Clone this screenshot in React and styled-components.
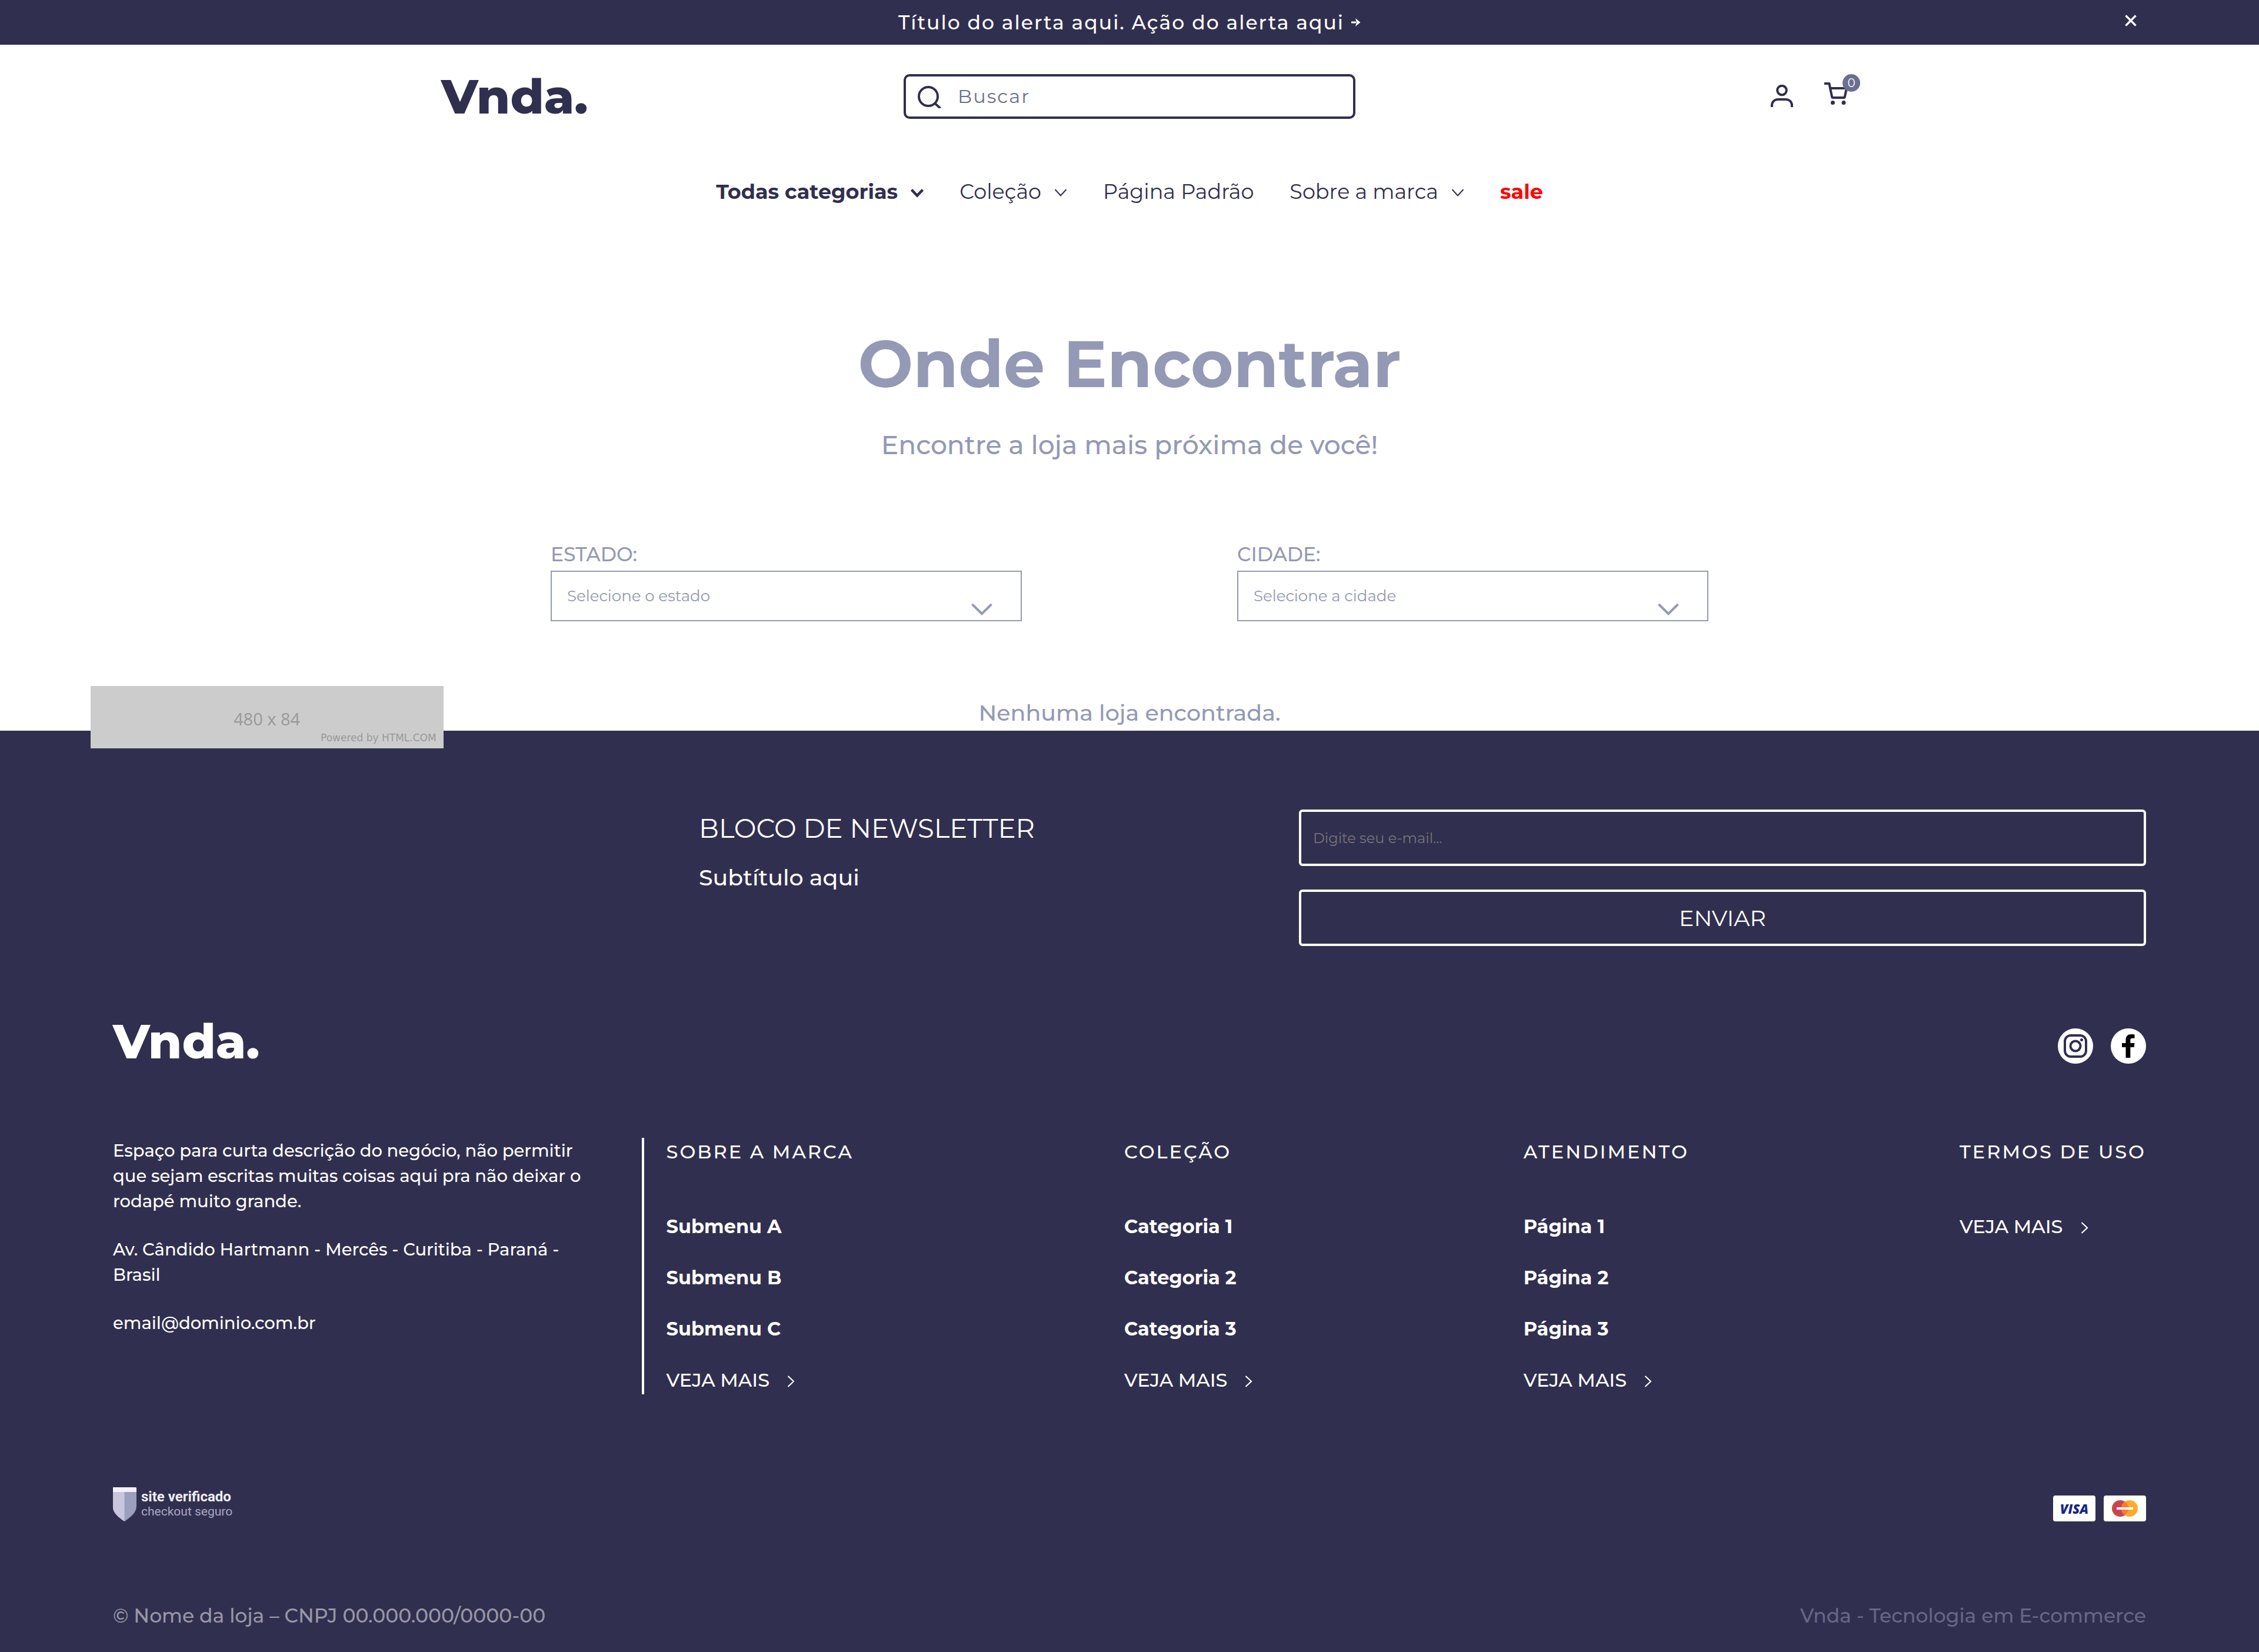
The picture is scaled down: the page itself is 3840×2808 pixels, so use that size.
import React from "react";
import styled, { createGlobalStyle } from "styled-components";

const color = {
  ink: "#312f4f",
  soft: "#6b6f8f",
  mist: "#9499b5",
  white: "#ffffff",
  sale: "#ff0000",
};

const GlobalStyle = createGlobalStyle`
  *, *::before, *::after { box-sizing: border-box; }
  body {
    margin: 0;
    background: ${color.white};
    color: ${color.ink};
    font-family: Montserrat, Inter, sans-serif;
    font-weight: 500;
  }
  h1, h2, h3, p, ul { margin: 0; padding: 0; }
  ul { list-style: none; }
  a { color: inherit; text-decoration: none; }
  svg { display: block; flex: none; }
  button, input, select { font: inherit; margin: 0; }
`;

/* ---------- alert ---------- */

const Alert = styled.div`
  display: grid;
  grid-template-columns: 1fr auto 1fr;
  align-items: center;
  height: 76px;
  padding: 0 208px;
  background: ${color.ink};
  color: ${color.white};
`;

const AlertLink = styled.a`
  grid-column: 2;
  display: flex;
  align-items: center;
  gap: 12px;
  font-size: 33px;
  line-height: 40px;
  letter-spacing: 2px;
`;

const CloseButton = styled.button`
  justify-self: end;
  padding: 0 0 6px;
  border: 0;
  background: none;
  color: inherit;
`;

/* ---------- header ---------- */

const HeaderBar = styled.div`
  display: grid;
  grid-template-columns: 1fr 768px 1fr;
  align-items: center;
  width: 100%;
  max-width: 2484px;
  margin: 0 auto;
  padding-top: 50px;
`;

const Logo = styled.a`
  font-size: 82px;
  font-weight: 800;
  line-height: 84px;
`;

const HeaderLogo = styled(Logo)`
  margin: -4px 0;
  padding-left: 72px;
`;

const Search = styled.label`
  display: flex;
  align-items: center;
  gap: 28px;
  height: 76px;
  padding: 0 20px;
  border: 4px solid ${color.ink};
  border-radius: 10px;
`;

const SearchInput = styled.input`
  flex: 1;
  min-width: 0;
  padding: 0;
  border: 0;
  outline: 0;
  background: none;
  color: ${color.ink};
  font-size: 32px;
  font-weight: 400;
  line-height: 40px;
  letter-spacing: 2px;
  &::placeholder { color: ${color.soft}; opacity: 1; }
`;

const Actions = styled.div`
  display: flex;
  align-items: flex-end;
  align-self: start;
  justify-self: end;
  gap: 53px;
`;

const CartLink = styled.a`
  position: relative;
  padding: 14px 21px 4px 0;
`;

const Badge = styled.span`
  position: absolute;
  top: 0;
  right: 0;
  width: 30px;
  height: 30px;
  border-radius: 50%;
  background: ${color.soft};
  color: ${color.white};
  font-size: 20px;
  font-weight: 400;
  line-height: 30px;
  text-align: center;
`;

const Nav = styled.nav`
  display: flex;
  justify-content: center;
  gap: 61px;
  margin-top: 100px;
`;

const NavLink = styled.a`
  display: flex;
  align-items: center;
  gap: 22px;
  font-size: 35px;
  line-height: 48px;
  font-weight: ${(p) => (p.$strong ? 700 : 400)};
  color: ${(p) => (p.$sale ? color.sale : color.ink)};
  svg { margin-top: 4px; }
`;

/* ---------- store finder ---------- */

const Main = styled.main`
  position: relative;
  padding: 202px 0 6px;
  color: ${color.mist};
  text-align: center;
`;

const Title = styled.h1`
  font-size: 111px;
  line-height: 134px;
  font-weight: 700;
`;

const Lead = styled.p`
  margin-top: 42px;
  font-size: 44px;
  line-height: 56px;
`;

const Filters = styled.form`
  display: grid;
  grid-template-columns: 1fr 1fr;
  gap: 366px;
  width: 100%;
  max-width: 1968px;
  margin: 138px auto 0;
  text-align: left;
`;

const Field = styled.div`
  display: flex;
  flex-direction: column;
  gap: 8px;
`;

const FieldLabel = styled.label`
  font-size: 33px;
  line-height: 40px;
`;

const SelectWrap = styled.div`
  position: relative;
  svg {
    position: absolute;
    right: 50px;
    bottom: 10px;
    pointer-events: none;
  }
`;

const Select = styled.select`
  display: block;
  width: 100%;
  height: 86px;
  padding: 0 26px;
  appearance: none;
  border: 2px solid ${color.mist};
  border-radius: 0;
  background: ${color.white};
  color: ${color.mist};
  font-size: 26px;
  font-weight: 400;
`;

const Status = styled.p`
  margin-top: 132px;
  font-size: 38px;
  line-height: 48px;
`;

const Placeholder = styled.div`
  position: absolute;
  left: 4%;
  bottom: -30px;
  display: flex;
  flex-direction: column;
  justify-content: flex-end;
  width: 600px;
  height: 106px;
  padding: 0 12px 6px;
  background: #cccccc;
  color: #999999;
`;

const PlaceholderSize = styled.span`
  font-family: "Open Sans", sans-serif;
  font-size: 29px;
  line-height: 40px;
`;

const PlaceholderCredit = styled.span`
  align-self: flex-end;
  font-family: "DejaVu Sans", sans-serif;
  font-size: 17px;
  line-height: 24px;
`;

/* ---------- footer ---------- */

const Footer = styled.footer`
  padding: 134px 5% 38px;
  background: ${color.ink};
  color: ${color.white};
`;

const Newsletter = styled.section`
  display: grid;
  grid-template-columns: 996fr 1020fr 1440fr;
`;

const NewsletterText = styled.div`
  grid-column: 2;
  padding-top: 4px;
`;

const NewsletterTitle = styled.h2`
  font-size: 45px;
  line-height: 56px;
  font-weight: 400;
`;

const NewsletterSubtitle = styled.p`
  margin-top: 32px;
  font-size: 38px;
  line-height: 48px;
`;

const NewsletterForm = styled.form`
  display: grid;
  gap: 40px;
`;

const EmailInput = styled.input`
  width: 100%;
  height: 96px;
  padding: 0 20px;
  border: 4px solid ${color.white};
  border-radius: 6px;
  background: none;
  color: ${color.white};
  font-size: 24px;
  font-weight: 400;
  &::placeholder { color: #757575; opacity: 1; }
`;

const SubmitButton = styled.button`
  height: 96px;
  border: 4px solid ${color.white};
  border-radius: 6px;
  background: none;
  color: ${color.white};
  font-size: 38px;
  font-weight: 400;
`;

const Row = styled.div`
  display: flex;
  align-items: flex-end;
  justify-content: space-between;
  margin-top: ${(p) => p.$top}px;
`;

const Social = styled.div`
  display: flex;
  gap: 30px;
  padding-bottom: 4px;
`;

const Columns = styled.div`
  display: grid;
  grid-template-columns: 26% 74%;
  margin-top: 122px;
`;

const About = styled.div`
  display: flex;
  flex-direction: column;
  gap: 39px;
  padding-right: 90px;
  font-size: 29px;
  line-height: 43px;
`;

const Menus = styled.div`
  display: flex;
  justify-content: space-between;
  padding-left: 38px;
  border-left: 4px solid ${color.white};
`;

const MenuTitle = styled.h3`
  font-size: 32px;
  line-height: 48px;
  font-weight: 500;
  letter-spacing: 3px;
`;

const MenuList = styled.ul`
  display: grid;
  gap: 39px;
  margin-top: 79px;
`;

const MenuLink = styled.a`
  display: flex;
  align-items: center;
  gap: 30px;
  font-size: 32px;
  line-height: 48px;
  font-weight: ${(p) => (p.$more ? 500 : 700)};
  svg { margin-top: 4px; }
`;

const Seal = styled.div`
  display: flex;
  align-items: center;
  gap: 8px;
  font-family: Roboto, sans-serif;
  font-size: 21px;
  line-height: 25px;
  font-weight: 400;
  color: #aaa7c4;
  strong { display: block; font-size: 24px; font-weight: 700; color: #eeedf6; }
`;

const Cards = styled.div`
  display: flex;
  gap: 14px;
`;

const Card = styled.span`
  display: flex;
  align-items: center;
  justify-content: center;
  width: 72px;
  height: 44px;
  border-radius: 4px;
  background: ${color.white};
  color: #15268c;
  font: italic 800 22px/44px "Open Sans", sans-serif;
`;

const Legal = styled.p`
  font-size: 33px;
  line-height: 48px;
  color: ${(p) => (p.$faint ? "#676687" : "#9897a7")};
`;

/* ---------- icons ---------- */

const stroke = (width) => ({ fill: "none", stroke: "currentColor", strokeWidth: width });

const ArrowIcon = () => (
  <svg width="16" height="16" viewBox="0 0 16 16" aria-hidden="true">
    <path d="M0 6.5h8V9.500H0z" fill="currentColor" />
    <path d="M7 1l8.500 7L7 15l2-7z" fill="currentColor" />
  </svg>
);

const CloseIcon = () => (
  <svg width="20" height="20" viewBox="0 0 20 20" {...stroke(3.4)}>
    <path d="M1.500 1.500l17 17M18.500 1.500l-17 17" />
  </svg>
);

const SearchIcon = () => (
  <svg width="40" height="40" viewBox="0 0 40 40" {...stroke(4)} aria-hidden="true">
    <circle cx="18" cy="20" r="16" />
    <path d="M28.500 31l10 9" />
  </svg>
);

const UserIcon = () => (
  <svg width="38" height="38" viewBox="0 0 38 38" {...stroke(4)}>
    <circle cx="19" cy="9.500" r="7.800" />
    <path d="M2 38v-3a10 10 0 0 1 10-10h14a10 10 0 0 1 10 10v3" />
  </svg>
);

const CartIcon = () => (
  <svg width="40" height="38" viewBox="0 0 40 38" {...stroke(4)} strokeLinejoin="round">
    <path d="M0 2h8.500l1.500 8h28l-3 14a2 2 0 0 1-2 2H15a2 2 0 0 1-2-2L10 10" />
    <circle cx="14.500" cy="34.500" r="3.500" fill="currentColor" stroke="none" />
    <circle cx="33" cy="34.500" r="3.500" fill="currentColor" stroke="none" />
  </svg>
);

const ChevronDown = ({ strong }) => (
  <svg
    width="22"
    height="16"
    viewBox="0 0 22 16"
    {...stroke(strong ? 4.6 : 2)}
    aria-hidden="true"
  >
    <path d={strong ? "M1.500 2.500l9.500 10 9.500-10" : "M1.500 2l9.500 10.500L20.500 2"} />
  </svg>
);

const SelectChevron = () => (
  <svg width="36" height="20" viewBox="0 0 36 20" {...stroke(4)} aria-hidden="true">
    <path d="M1.500 1L18 17.200 34.500 1" />
  </svg>
);

const ChevronRight = () => (
  <svg width="13" height="20" viewBox="0 0 13 20" {...stroke(2.2)} aria-hidden="true">
    <path d="M1.500 1l9.500 9-9.500 9" />
  </svg>
);

const InstagramIcon = () => (
  <svg width="60" height="60" viewBox="0 0 60 60">
    <circle cx="30" cy="30" r="30" fill={color.white} />
    <rect x="12" y="12" width="36" height="36" rx="10" {...stroke(4)} stroke={color.ink} />
    <circle cx="30" cy="30" r="8.500" {...stroke(4)} stroke={color.ink} />
    <circle cx="40.500" cy="19.500" r="2.500" fill={color.ink} />
  </svg>
);

const FacebookIcon = () => (
  <svg width="60" height="60" viewBox="0 0 60 60">
    <circle cx="30" cy="30" r="30" fill={color.white} />
    <path
      d="M25.500 50V32H19v-7h6.500v-5.500c0-6.300 3.600-9.500 9.200-9.500 2.600 0 5.300.2 5.800.5v6.200h-3.600c-2.900 0-3.600 1.400-3.600 3.600V25h7.200l-1 7h-6.200v18z"
      fill="#000"
    />
  </svg>
);

const ShieldIcon = () => (
  <svg width="40" height="58" viewBox="0 0 40 58" aria-hidden="true">
    <path d="M0 0h38q2 0 2 3v29c0 11-10 19-20.500 26C9 51 0 43 0 34z" fill="#9aa0bd" />
    <path d="M0 8h19.500v50C9 51 0 43 0 34z" fill="#c9c5dc" />
    <path d="M0 0h38q2 0 2 3v5H0z" fill="#f3f1f8" />
  </svg>
);

const MastercardIcon = () => (
  <svg width="44" height="28" viewBox="0 0 44 28">
    <circle cx="14" cy="14" r="14" fill="#cc444b" />
    <circle cx="30" cy="14" r="14" fill="#ffa92f" />
    <path d="M22 2.500a14 14 0 0 1 0 23 14 14 0 0 1 0-23z" fill="#ff7733" />
    <path d="M8 12h28v4H8z" fill={color.white} />
  </svg>
);

/* ---------- data ---------- */

const navItems = [
  { label: "Todas categorias", menu: true, strong: true },
  { label: "Coleção", menu: true },
  { label: "Página Padrão" },
  { label: "Sobre a marca", menu: true },
  { label: "sale", strong: true, sale: true },
];

const menus = [
  { title: "SOBRE A MARCA", items: ["Submenu A", "Submenu B", "Submenu C"] },
  { title: "COLEÇÃO", items: ["Categoria 1", "Categoria 2", "Categoria 3"] },
  { title: "ATENDIMENTO", items: ["Página 1", "Página 2", "Página 3"] },
  { title: "TERMOS DE USO", items: [] },
];

const SelectField = ({ id, label, placeholder }) => (
  <Field>
    <FieldLabel htmlFor={id}>{label}</FieldLabel>
    <SelectWrap>
      <Select id={id} defaultValue="">
        <option value="">{placeholder}</option>
      </Select>
      <SelectChevron />
    </SelectWrap>
  </Field>
);

export default function App() {
  return (
    <>
      <GlobalStyle />
      <Alert>
        <AlertLink href="#alerta">
          Título do alerta aqui. Ação do alerta aqui
          <ArrowIcon />
        </AlertLink>
        <CloseButton type="button" aria-label="Fechar">
          <CloseIcon />
        </CloseButton>
      </Alert>

      <header>
        <HeaderBar>
          <HeaderLogo href="#inicio">Vnda.</HeaderLogo>
          <Search>
            <SearchIcon />
            <SearchInput type="search" placeholder="Buscar" aria-label="Buscar" />
          </Search>
          <Actions>
            <a href="#conta" aria-label="Minha conta">
              <UserIcon />
            </a>
            <CartLink href="#carrinho" aria-label="Carrinho">
              <CartIcon />
              <Badge>0</Badge>
            </CartLink>
          </Actions>
        </HeaderBar>
        <Nav>
          {navItems.map((item) => (
            <NavLink key={item.label} href="#nav" $strong={item.strong} $sale={item.sale}>
              {item.label}
              {item.menu && <ChevronDown strong={item.strong} />}
            </NavLink>
          ))}
        </Nav>
      </header>

      <Main>
        <Title>Onde Encontrar</Title>
        <Lead>Encontre a loja mais próxima de você!</Lead>
        <Filters>
          <SelectField id="estado" label="ESTADO:" placeholder="Selecione o estado" />
          <SelectField id="cidade" label="CIDADE:" placeholder="Selecione a cidade" />
        </Filters>
        <Status>Nenhuma loja encontrada.</Status>
        <Placeholder>
          <PlaceholderSize>480 x 84</PlaceholderSize>
          <PlaceholderCredit>Powered by HTML.COM</PlaceholderCredit>
        </Placeholder>
      </Main>

      <Footer>
        <Newsletter>
          <NewsletterText>
            <NewsletterTitle>BLOCO DE NEWSLETTER</NewsletterTitle>
            <NewsletterSubtitle>Subtítulo aqui</NewsletterSubtitle>
          </NewsletterText>
          <NewsletterForm>
            <EmailInput type="email" placeholder="Digite seu e-mail..." aria-label="E-mail" />
            <SubmitButton type="submit">ENVIAR</SubmitButton>
          </NewsletterForm>
        </Newsletter>

        <Row $top={120}>
          <Logo href="#inicio">Vnda.</Logo>
          <Social>
            <a href="#instagram" aria-label="Instagram">
              <InstagramIcon />
            </a>
            <a href="#facebook" aria-label="Facebook">
              <FacebookIcon />
            </a>
          </Social>
        </Row>

        <Columns>
          <About>
            <p>
              Espaço para curta descrição do negócio, não permitir que sejam escritas muitas coisas
              aqui pra não deixar o rodapé muito grande.
            </p>
            <p>Av. Cândido Hartmann - Mercês - Curitiba - Paraná - Brasil</p>
            <p>email@dominio.com.br</p>
          </About>
          <Menus>
            {menus.map((menu) => (
              <div key={menu.title}>
                <MenuTitle>{menu.title}</MenuTitle>
                <MenuList>
                  {menu.items.map((item) => (
                    <li key={item}>
                      <MenuLink href="#menu">{item}</MenuLink>
                    </li>
                  ))}
                  <li>
                    <MenuLink href="#mais" $more>
                      VEJA MAIS
                      <ChevronRight />
                    </MenuLink>
                  </li>
                </MenuList>
              </div>
            ))}
          </Menus>
        </Columns>

        <Row $top={158}>
          <Seal>
            <ShieldIcon />
            <span>
              <strong>site verificado</strong>
              checkout seguro
            </span>
          </Seal>
          <Cards>
            <Card>VISA</Card>
            <Card>
              <MastercardIcon />
            </Card>
          </Cards>
        </Row>

        <Row $top={136}>
          <Legal>© Nome da loja – CNPJ 00.000.000/0000-00</Legal>
          <Legal $faint>Vnda - Tecnologia em E-commerce</Legal>
        </Row>
      </Footer>
    </>
  );
}
